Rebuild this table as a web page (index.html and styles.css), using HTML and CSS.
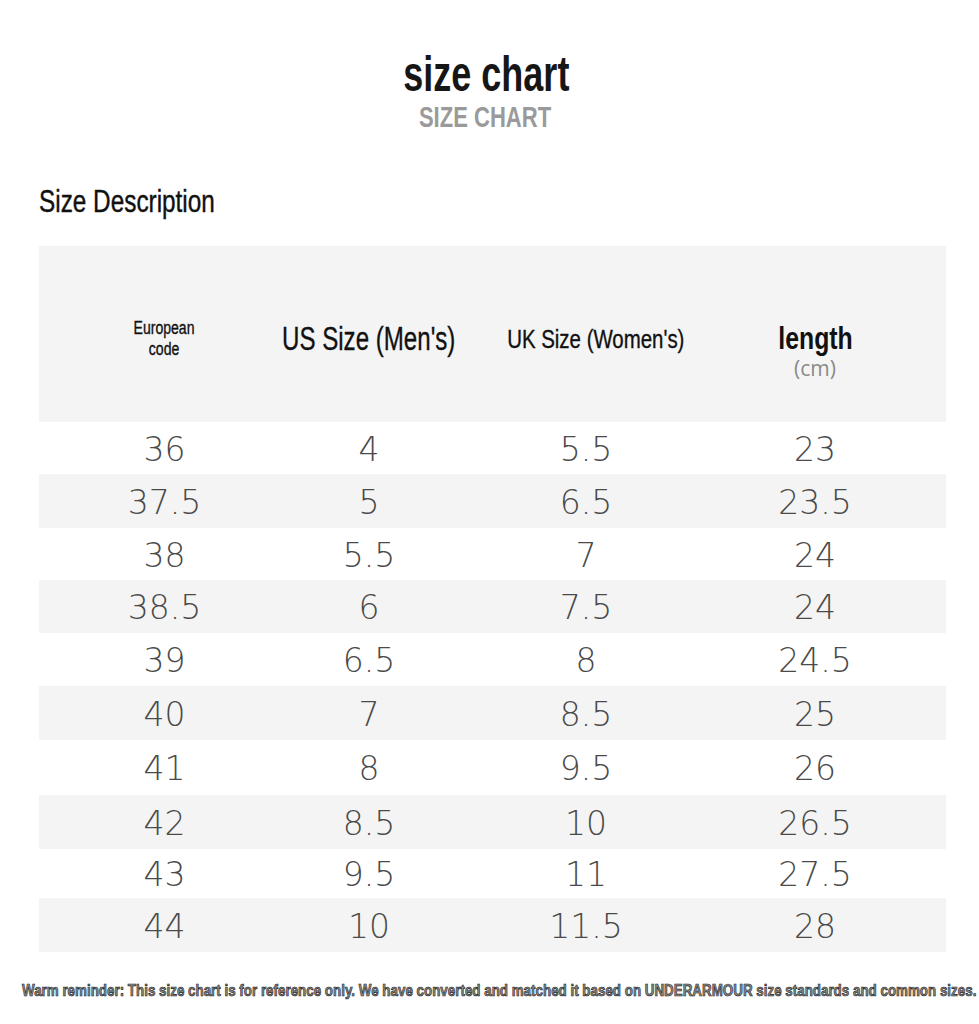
FILE: index.html
```html
<!DOCTYPE html>
<html lang="en">
<head>
<meta charset="utf-8">
<title>size chart</title>
<link rel="stylesheet" href="styles.css">
</head>
<body>
<header class="heading">
  <h1 class="title"><span class="narrow">size chart</span></h1>
  <div class="subtitle"><span class="narrow">SIZE CHART</span></div>
</header>
<h2 class="section"><span class="narrow">Size Description</span></h2>
<div class="chart">
  <div class="row head">
    <div class="cell h-eu"><span class="narrow">European<br>code</span></div>
    <div class="cell h-us"><span class="narrow">US Size (Men's)</span></div>
    <div class="cell h-uk"><span class="narrow">UK Size (Women's)</span></div>
    <div class="cell h-len"><span class="len narrow">length</span><span class="cm">(cm)</span></div>
  </div>
  <div class="row"><div class="cell">36</div><div class="cell">4</div><div class="cell">5.5</div><div class="cell">23</div></div>
  <div class="row alt"><div class="cell">37.5</div><div class="cell">5</div><div class="cell">6.5</div><div class="cell">23.5</div></div>
  <div class="row"><div class="cell">38</div><div class="cell">5.5</div><div class="cell">7</div><div class="cell">24</div></div>
  <div class="row alt"><div class="cell">38.5</div><div class="cell">6</div><div class="cell">7.5</div><div class="cell">24</div></div>
  <div class="row"><div class="cell">39</div><div class="cell">6.5</div><div class="cell">8</div><div class="cell">24.5</div></div>
  <div class="row alt"><div class="cell">40</div><div class="cell">7</div><div class="cell">8.5</div><div class="cell">25</div></div>
  <div class="row"><div class="cell">41</div><div class="cell">8</div><div class="cell">9.5</div><div class="cell">26</div></div>
  <div class="row alt"><div class="cell">42</div><div class="cell">8.5</div><div class="cell">10</div><div class="cell">26.5</div></div>
  <div class="row"><div class="cell">43</div><div class="cell">9.5</div><div class="cell">11</div><div class="cell">27.5</div></div>
  <div class="row alt"><div class="cell">44</div><div class="cell">10</div><div class="cell">11.5</div><div class="cell">28</div></div>
</div>
<div class="note"><span class="note-text">Warm reminder: This size chart is for reference only. We have converted and matched it based on UNDERARMOUR size standards and common sizes.</span></div>
</body>
</html>
```

FILE: styles.css
```css
* { box-sizing: border-box; }
html, body { margin: 0; padding: 0; background: #ffffff; }
body {
  width: 979px;
  overflow: hidden;
  font-family: "Liberation Sans", Arial, sans-serif;
  color: #111;
}
.narrow {
  display: inline-block;
  white-space: nowrap;
}
.heading {
  display: flex;
  flex-direction: column;
  align-items: center;
  padding-top: 48px;
  padding-right: 6px;
}
.title {
  margin: 0;
  font-size: 50px;
  line-height: 52px;
  font-weight: 700;
  color: #161616;
}
.title .narrow { transform: scaleX(0.72); }
.subtitle {
  margin-top: 2px;
  padding-right: 4px;
  font-size: 29px;
  line-height: 30px;
  font-weight: 700;
  color: #9a9a9a;
}
.subtitle .narrow { transform: scaleX(0.76); }
.section {
  margin: 52px 0 0 39px;
  font-size: 31px;
  line-height: 36px;
  font-weight: 400;
  color: #111;
}
.section .narrow { transform: scaleX(0.785); transform-origin: left center; -webkit-text-stroke: 0.4px #111; }
.chart {
  margin: 26px 0 0 39px;
  width: 907px;
}
.row {
  display: grid;
  grid-template-columns: 205px 204px 230px 228px;
  padding: 0 17px 0 23px;
  height: 53px;
  align-items: center;
}
.row.alt { background: #f4f4f4; }
.row:nth-child(2) { height: 52px; }
.row:nth-child(3) { height: 54px; }
.row:nth-child(4) { height: 52px; }
.row:nth-child(7) { height: 54px; }
.row:nth-child(8) { height: 55px; }
.row:nth-child(9) { height: 54px; }
.row:nth-child(10) { height: 49px; }
.row:nth-child(11) { height: 54px; }
.row.head {
  height: 176px;
  background: #f4f4f4;
}
.cell {
  text-align: center;
  font-family: "DejaVu Sans ExtraLight", "DejaVu Sans", sans-serif;
  font-weight: 200;
  font-size: 33px;
  line-height: 36px;
  padding-top: 3px;
  color: #4a4a4a;
}
.head .cell {
  font-family: "Liberation Sans", Arial, sans-serif;
  font-weight: 400;
  color: #111;
  padding-top: 10px;
  display: flex;
  flex-direction: column;
  align-items: center;
}
.head .narrow { -webkit-text-stroke: 0.35px #111; }
.head .h-eu { font-size: 18px; line-height: 21px; }
.h-eu .narrow { transform: scaleX(0.78); text-align: center; }
.head .h-us { font-size: 33px; line-height: 36px; }
.h-us .narrow { transform: scaleX(0.73); }
.head .h-uk { font-size: 26px; line-height: 30px; padding-left: 20px; }
.h-uk .narrow { transform: scaleX(0.786); }
.head .h-len { padding-top: 34px; }
.head .len {
  font-size: 31px;
  line-height: 32px;
  font-weight: 700;
  color: #111;
  transform: scaleX(0.8);
  -webkit-text-stroke: 0;
}
.cm {
  margin-top: 2px;
  font-family: "Open Sans", sans-serif;
  font-size: 21px;
  line-height: 22px;
  color: #8a8a8a;
}
.note {
  width: 979px;
  overflow: hidden;
  margin-top: 29px;
  padding-left: 22px;
  height: 22px;
}
.note-text {
  display: inline-block;
  white-space: nowrap;
  font-size: 17px;
  line-height: 20px;
  font-weight: 700;
  color: #8a8a8a;
  -webkit-text-stroke: 0.7px #222;
  transform: scaleX(0.787);
  transform-origin: left center;
}
```
